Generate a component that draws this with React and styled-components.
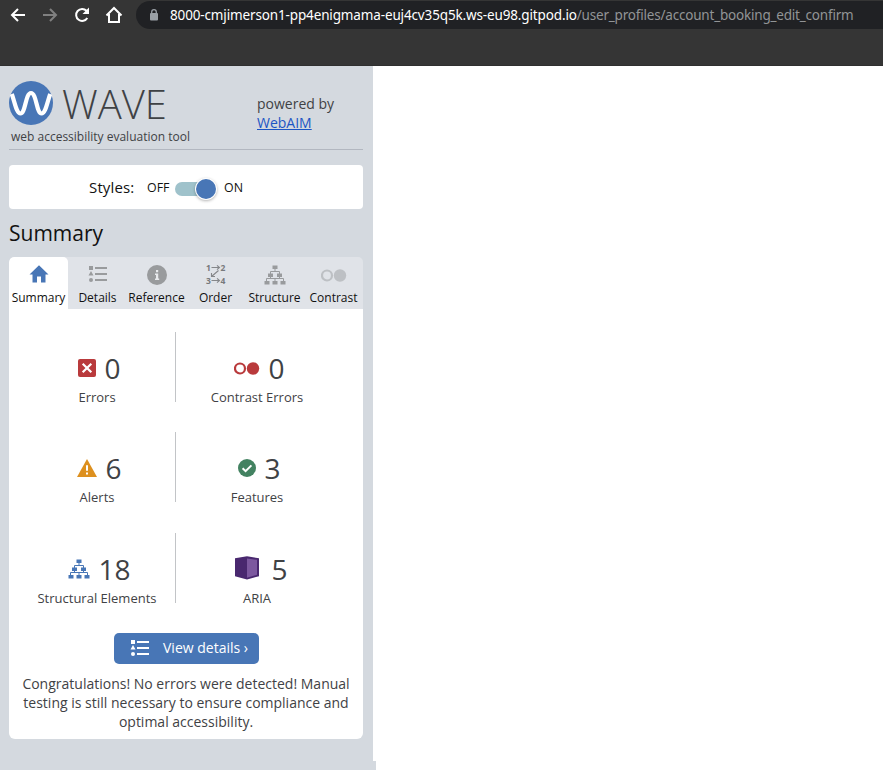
import React from 'react';
import styled, { createGlobalStyle } from 'styled-components';

const GlobalStyle = createGlobalStyle`
  * { box-sizing: border-box; }
  body { margin: 0; background: #fff; font-family: "Open Sans", "Noto Sans", sans-serif; color: #3f4245; }
  svg { display: block; flex: none; }
`;

const Window = styled.div`
  width: 883px;
  height: 770px;
  overflow: hidden;
  display: flex;
  flex-direction: column;
`;

const BrowserBar = styled.header`
  height: 66px;
  flex: none;
  background: #353535;
  border-bottom: 1px solid #2f2f2f;
  padding: 1px 0 0 8px;
  display: flex;
  align-items: flex-start;
`;

const NavButtons = styled.nav`
  height: 28px;
  width: 128px;
  display: flex;
  align-items: center;
  gap: 12px;
`;

const AddressBar = styled.div`
  flex: 1;
  height: 28px;
  background: #202124;
  border-radius: 14px 0 0 14px;
  display: flex;
  align-items: center;
  padding-left: 13px;
`;

const Url = styled.div`
  margin-left: 11px;
  font-family: "Noto Sans", sans-serif;
  font-size: 13.5px;
  line-height: 20px;
  white-space: nowrap;
  color: #929496;
  letter-spacing: -0.2px;
`;

const Host = styled.span`
  color: #fff;
  letter-spacing: -0.14px;
`;

const Page = styled.main`
  flex: 1;
  display: flex;
  align-items: flex-start;
`;

const Sidebar = styled.aside`
  width: 373px;
  height: 704px;
  background: #d4d9df;
  padding: 15px 10px 0 9px;
`;

const ResizeCorner = styled.div`
  width: 3px;
  height: 9px;
  align-self: flex-end;
  background: #d4d9df;
`;

const Masthead = styled.div`
  height: 69px;
  border-bottom: 1px solid #b2b7c0;
  display: flex;
`;

const Brand = styled.div`
  width: 248px;
`;

const BrandRow = styled.div`
  height: 44px;
  display: flex;
  align-items: center;
  gap: 9px;
`;

const Wordmark = styled.span`
  font-size: 40px;
  font-weight: 300;
  line-height: 40px;
  padding-top: 2px;
  letter-spacing: 0;
  color: #3f4245;
`;

const Tagline = styled.div`
  margin: 3px 0 0 2px;
  font-size: 12px;
  line-height: 17px;
  white-space: nowrap;
`;

const PoweredBy = styled.div`
  padding-top: 13px;
  font-size: 14px;
  line-height: 19px;
`;

const Link = styled.a`
  display: block;
  color: #1c55c4;
  text-decoration: underline;
`;

const StylesPanel = styled.section`
  margin-top: 15px;
  height: 44px;
  background: #fff;
  border-radius: 4px;
  display: flex;
  align-items: center;
  padding-left: 80px;
  color: #111;
  font-size: 12.4px;
`;

const StylesLabel = styled.span`
  font-size: 15px;
  width: 58px;
  letter-spacing: 0.15px;
`;

const ToggleState = styled.span`
  width: ${p => p.$width};
  line-height: 20px;
  padding-top: 1px;
`;

const Track = styled.span`
  width: 41px;
  height: 14px;
  margin: 3px 8px 0 0;
  border-radius: 7px;
  background: #9fc2cb;
  display: flex;
  align-items: center;
  justify-content: flex-end;
`;

const Knob = styled.span`
  width: 20px;
  height: 20px;
  border-radius: 50%;
  background: #4876b6;
  box-shadow: 0 0 0 1px #fff, 0 1px 3px 1px rgba(0, 0, 0, 0.3);
`;

const Heading = styled.h1`
  margin: 9px 0 0;
  height: 39px;
  font-size: 21px;
  line-height: 30px;
  font-weight: 400;
  color: #111;
`;

const Tabs = styled.div`
  height: 52px;
  display: grid;
  grid-template-columns: repeat(6, 59px);
  border-radius: 5px 5px 0 0;
  overflow: hidden;
  background: #e0e3e8;
`;

const Tab = styled.div`
  display: flex;
  flex-direction: column;
  align-items: center;
  padding-top: 6px;
  background: ${p => (p.$active ? '#fff' : 'transparent')};
  border-radius: ${p => (p.$active ? '5px 5px 0 0' : '0')};
  color: #111;
  font-size: 12px;
  line-height: 17px;
  white-space: nowrap;
`;

const TabIcon = styled.div`
  height: 26px;
  padding-bottom: ${p => (p.$raised ? '4px' : '2px')};
  display: flex;
  align-items: center;
  justify-content: center;
`;

const Report = styled.section`
  height: 430px;
  background: #fff;
  border-radius: 0 0 6px 6px;
  padding-top: 23px;
  display: flex;
  flex-direction: column;
  align-items: center;
`;

const Stats = styled.div`
  width: 336px;
  height: 301px;
  display: grid;
  grid-template-columns: 158px 162px;
  grid-template-rows: 100px 101px 100px;
`;

const Stat = styled.div`
  height: 70px;
  border-right: 1px solid ${p => (p.$divided ? '#c2c4c7' : 'transparent')};
  padding-left: 1px;
  display: flex;
  flex-direction: column;
  align-items: center;
`;

const StatTop = styled.div`
  height: 56px;
  flex: none;
  padding: 16px 0 0 ${p => (p.$wide ? '9px' : '5px')};
  display: flex;
  align-items: center;
  gap: ${p => (p.$wide ? '12px' : '8px')};
`;

const Count = styled.span`
  font-size: 28px;
  line-height: 40px;
`;

const StatLabel = styled.span`
  font-size: 13px;
  line-height: 19px;
  white-space: nowrap;
`;

const DetailsButton = styled.button`
  width: 145px;
  height: 31px;
  border: 0;
  border-radius: 5px;
  background: #4876b6;
  color: #fff;
  font: 14px/20px "Open Sans", sans-serif;
  display: flex;
  align-items: center;
  padding: 0 0 1px 16px;
  gap: 13.5px;
  white-space: nowrap;
`;

const Message = styled.p`
  margin: 10px 0 0;
  width: 340px;
  text-align: center;
  font-size: 14px;
  line-height: 19px;
`;

const NavIcon = ({ color = '#fff', children }) => (
  <svg width="20" height="20" viewBox="0 0 20 20" fill="none" stroke={color} strokeWidth="2">{children}</svg>
);

const ListIcon = ({ color }) => (
  <svg width="20" height="18" viewBox="0 0 20 18" fill={color}>
    <path d="M1 1h4v4H1zM3 6l2.500 4.500h-5zM7 2h12v2H7zM7 8h12v2H7zM7 14h12v2H7z" />
    <circle cx="3" cy="15" r="2" />
  </svg>
);

const TreeIcon = ({ color }) => (
  <svg width="22" height="20" viewBox="0 0 22 20">
    <path fill={color} d="M8.500 0.500h5v3.500h-5zM4 8.500h5V12H4zM13 8.500h5V12h-5zM0.500 16h5v3.500h-5zM8.500 16h5v3.500h-5zM16.500 16h5v3.500h-5z" />
    <path fill="none" stroke={color} d="M11 4v2.500M6.500 9V6.500h9V9M6.500 12v1.500M15.500 12v1.500M2.500 16v-2.500h17V16M11 13.500V16" />
  </svg>
);

const ContrastIcon = ({ color }) => (
  <svg width="26" height="13" viewBox="0 0 26 13">
    <circle cx="6" cy="6.500" r="5" fill="none" stroke={color} strokeWidth="2.200" />
    <circle cx="19" cy="6.500" r="6.200" fill={color} />
  </svg>
);

const HomeIcon = () => (
  <svg width="20" height="18" viewBox="0 0 20 18">
    <path fill="#4876b6" d="M10 0.300 19.500 9.500H16.500V17.500H12V11.500H8V17.500H3.500V9.500H.5z" />
  </svg>
);

const InfoIcon = () => (
  <svg width="20" height="20" viewBox="0 0 20 20">
    <circle cx="10" cy="10" r="10" fill="#999b9d" />
    <path fill="#e8eaed" d="M9 5h2.200v2.200H9zM8 8.500h3.200v5h1V15H8v-1.500h1V10H8z" />
  </svg>
);

const OrderIcon = () => (
  <svg width="22" height="24" viewBox="-1 -2 22 24" fontFamily="Open Sans" fontWeight="700" fontSize="8.500" overflow="visible">
    <g fill="#77797c">
      <text x="0" y="6.500">1</text><text x="14.500" y="6.500">2</text>
      <text x="0" y="19.500">3</text><text x="14.500" y="19.500">4</text>
    </g>
    <path d="M5.500 3.500h8M11 1.300l2.500 2.200L11 5.700M12.500 6.500l-7 6M5.500 9v3.500H9M5.500 16.500h8M11 14.300l2.500 2.200L11 18.700" fill="none" stroke="#85878a" strokeWidth="1.100" />
  </svg>
);

const ErrorIcon = () => (
  <svg width="18" height="18" viewBox="0 0 18 18">
    <rect width="18" height="18" rx="2" fill="#b93a3c" />
    <path d="M4.700 4.700l8.600 8.600M13.300 4.700l-8.600 8.600" stroke="#fff" strokeWidth="2.200" />
  </svg>
);

const AlertIcon = () => (
  <svg width="20" height="18" viewBox="0 0 20 18">
    <path d="M10 0l10 18H0z" fill="#dd901f" />
    <path d="M9 6.200h2v5.600H9zM9 13.500h2v2H9z" fill="#fff" />
  </svg>
);

const FeatureIcon = () => (
  <svg width="18" height="18" viewBox="0 0 18 18">
    <circle cx="9" cy="9" r="9" fill="#438261" />
    <path d="M4.600 9.200l3 3 5.800-5.800" fill="none" stroke="#fff" strokeWidth="2" />
  </svg>
);

const AriaIcon = () => (
  <svg width="24" height="26" viewBox="0 0 24 26">
    <path d="M0 2.200 12 .3l12 1.900v18L12 23.500 0 20.200z" fill="#49286f" />
    <path d="M12 2.600 22 3.800v15L12 21.800z" fill="#7c589f" />
  </svg>
);

const WaveLogo = () => (
  <svg width="44" height="44" viewBox="0 0 44 44">
    <circle cx="22" cy="22" r="22" fill="#4876b6" />
    <path d="M2.800 13C6 22 7.500 32.500 11.500 32.500C16.500 32.500 16.500 12 22 12C27.500 12 27.500 32.500 32.500 32.500C36.500 32.500 38 22 41.200 13" fill="none" stroke="#fff" strokeWidth="4.200" />
  </svg>
);

const tabs = [
  { label: 'Summary', icon: <HomeIcon />, active: true, raised: true },
  { label: 'Details', icon: <ListIcon color="#999b9d" />, raised: true },
  { label: 'Reference', icon: <InfoIcon /> },
  { label: 'Order', icon: <OrderIcon />, raised: true },
  { label: 'Structure', icon: <TreeIcon color="#999b9d" /> },
  { label: 'Contrast', icon: <ContrastIcon color="#bdc0c4" /> },
];

const stats = [
  { label: 'Errors', count: 0, icon: <ErrorIcon /> },
  { label: 'Contrast Errors', count: 0, icon: <ContrastIcon color="#b93a3c" /> },
  { label: 'Alerts', count: 6, icon: <AlertIcon /> },
  { label: 'Features', count: 3, icon: <FeatureIcon /> },
  { label: 'Structural Elements', count: 18, icon: <TreeIcon color="#4876b6" /> },
  { label: 'ARIA', count: 5, icon: <AriaIcon />, wide: true },
];

export default function App() {
  return (
    <Window>
      <GlobalStyle />
      <BrowserBar>
        <NavButtons>
          <NavIcon><path d="M17 10H4M10 4l-6 6 6 6" /></NavIcon>
          <NavIcon color="#808080"><path d="M3 10h13M10 4l6 6-6 6" /></NavIcon>
          <NavIcon><path d="M15.300 13A6 6 0 1 1 14.500 5.800L16 7.300" /><path d="M17 2.500V9h-6.500z" fill="#fff" stroke="none" /></NavIcon>
          <NavIcon><path d="M5 9v8h10V9M2.500 10.500 10 3l7.500 7.500" /></NavIcon>
        </NavButtons>
        <AddressBar>
          <svg width="10" height="12" viewBox="0 0 10 12">
            <rect x="1" y="4" width="8" height="7.500" rx="1" fill="#9aa0a6" />
            <path d="M2.700 5V3a2.300 2.300 0 0 1 4.600 0v2" fill="none" stroke="#9aa0a6" strokeWidth="1.300" />
          </svg>
          <Url><Host>8000-cmjimerson1-pp4enigmama-euj4cv35q5k.ws-eu98.gitpod.io</Host>/user_profiles/account_booking_edit_confirm</Url>
        </AddressBar>
      </BrowserBar>
      <Page>
        <Sidebar>
          <Masthead>
            <Brand>
              <BrandRow><WaveLogo /><Wordmark>WAVE</Wordmark></BrandRow>
              <Tagline>web accessibility evaluation tool</Tagline>
            </Brand>
            <PoweredBy>powered by<Link href="#">WebAIM</Link></PoweredBy>
          </Masthead>
          <StylesPanel>
            <StylesLabel>Styles:</StylesLabel>
            <ToggleState $width="28px">OFF</ToggleState>
            <Track><Knob /></Track>
            <ToggleState $width="24px">ON</ToggleState>
          </StylesPanel>
          <Heading>Summary</Heading>
          <Tabs>
            {tabs.map(t => (
              <Tab key={t.label} $active={t.active}><TabIcon $raised={t.raised}>{t.icon}</TabIcon>{t.label}</Tab>
            ))}
          </Tabs>
          <Report>
            <Stats>
              {stats.map((s, i) => (
                <Stat key={s.label} $divided={i % 2 === 0}>
                  <StatTop $wide={s.wide}>{s.icon}<Count>{s.count}</Count></StatTop>
                  <StatLabel>{s.label}</StatLabel>
                </Stat>
              ))}
            </Stats>
            <DetailsButton><ListIcon color="#fff" />View details ›</DetailsButton>
            <Message>Congratulations! No errors were detected! Manual testing is still necessary to ensure compliance and optimal accessibility.</Message>
          </Report>
        </Sidebar>
        <ResizeCorner />
      </Page>
    </Window>
  );
}
